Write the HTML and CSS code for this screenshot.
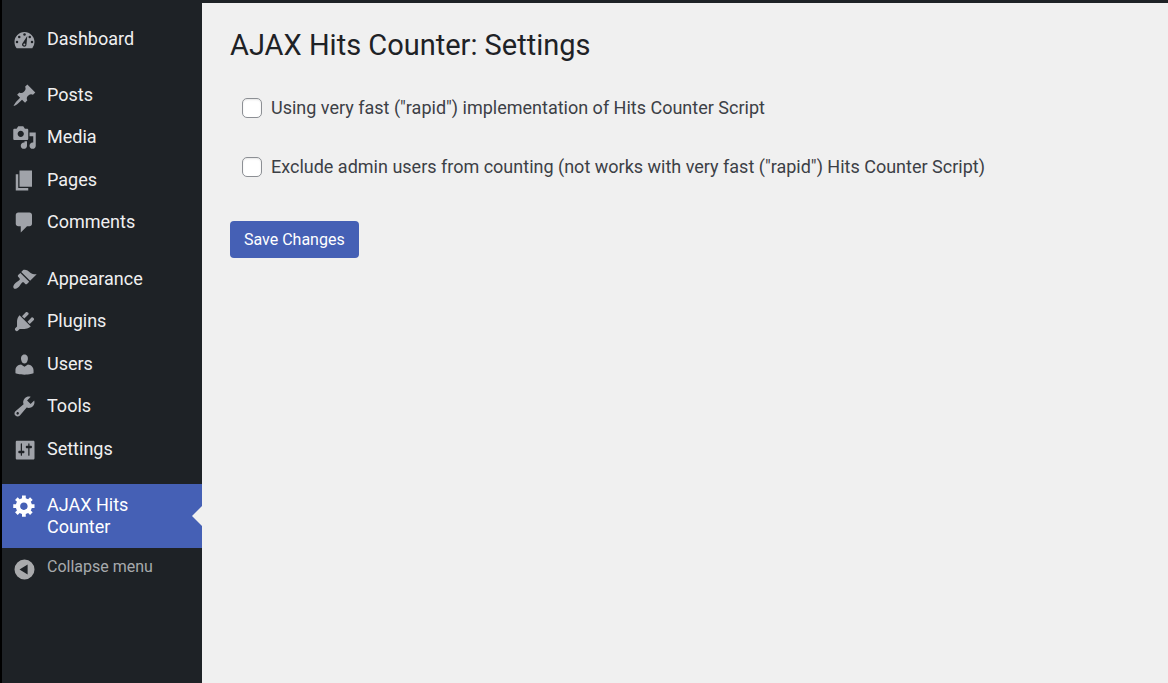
FILE: index.html
```html
<!DOCTYPE html>
<html lang="en">
<head>
<meta charset="utf-8">
<title>AJAX Hits Counter: Settings</title>
<link rel="stylesheet" href="styles.css">
</head>
<body>
<div class="admin">
  <nav class="sidebar" aria-label="Main menu">
    <ul class="menu">
      <li><a class="item" href="#"><svg class="icon" viewBox="0 0 20 20"><path d="M3.76 17h12.48A7.98 7.98 0 0 0 18 12c0-4.42-3.58-8-8-8s-8 3.58-8 8c0 1.9.66 3.65 1.76 5z"/><g class="cut"><circle cx="10" cy="6" r="1"/><circle cx="5.8" cy="8" r="1"/><circle cx="14.2" cy="8" r="1"/><circle cx="4" cy="12" r="1"/><circle cx="16" cy="12" r="1"/><path d="M12.2 7.2L11.6 13.8c0 1.2-.7 2-1.7 2s-1.9-.8-1.9-1.8c0-.7.4-1.2.8-1.7z"/></g><circle cx="9.9" cy="14" r=".8"/></svg><span>Dashboard</span></a></li>
    </ul>
    <ul class="menu">
      <li><a class="item" href="#"><svg class="icon" viewBox="0 0 20 20"><path d="M10.44 3.02l1.82-1.82 6.36 6.35-1.83 1.82c-1.05-.68-2.48-.57-3.41.36l-.75.75c-.92.93-1.04 2.35-.35 3.41l-1.83 1.82-2.41-2.41-2.8 2.79c-.42.42-3.38 2.71-3.8 2.29s1.86-3.39 2.28-3.81l2.79-2.79L4.1 9.36l1.83-1.82c1.05.69 2.48.57 3.4-.36l.75-.75c.93-.92 1.05-2.35.36-3.41z"/></svg><span>Posts</span></a></li>
      <li><a class="item" href="#"><svg class="icon" viewBox="0 0 20 20"><path fill-rule="evenodd" d="M13 11V4c0-.55-.45-1-1-1h-1.67L9 1H5L3.67 3H2c-.55 0-1 .45-1 1v7c0 .55.45 1 1 1h10c.55 0 1-.45 1-1zM7 4.5c1.38 0 2.5 1.12 2.5 2.5S8.38 9.5 7 9.5 4.5 8.38 4.5 7 5.62 4.5 7 4.5zM14 6h5v10.5c0 1.38-1.12 2.5-2.5 2.5S14 17.88 14 16.5s1.12-2.5 2.5-2.5c.17 0 .34.02.5.05V9h-3V6zm-4 8.05V13h2v3.5c0 1.38-1.12 2.5-2.5 2.5S7 17.88 7 16.5 8.12 14 9.5 14c.17 0 .34.02.5.05z"/></svg><span>Media</span></a></li>
      <li><a class="item" href="#"><svg class="icon" viewBox="0 0 20 20"><path d="M6 15V2h10v13H6zm-1 1h8v2H3V5h2v11z"/></svg><span>Pages</span></a></li>
      <li><a class="item" href="#"><svg class="icon" viewBox="0 0 20 20"><path d="M5 2h9c1.1 0 2 .9 2 2v7c0 1.1-.9 2-2 2h-2l-5 5v-5H5c-1.1 0-2-.9-2-2V4c0-1.1.9-2 2-2z"/></svg><span>Comments</span></a></li>
    </ul>
    <ul class="menu">
      <li><a class="item" href="#"><svg class="icon" viewBox="0 0 20 20"><path d="M14.48 11.06L7.41 3.99l1.5-1.5c.5-.56 2.3-.47 3.51.32 1.21.8 1.43 1.28 2.91 2.1 1.18.64 2.45 1.26 4.45.85zm-.71.71L6.7 4.7 4.93 6.47c-.39.39-.39 1.02 0 1.41l1.06 1.06c.39.39.39 1.03 0 1.42-.6.6-1.43 1.11-2.21 1.69-.35.26-.7.53-1.01.84C1.43 14.23.4 16.08 1.4 17.07c.99 1 2.84-.03 4.18-1.36.31-.31.58-.66.85-1.02.57-.78 1.08-1.61 1.69-2.21.39-.39 1.02-.39 1.41 0l1.06 1.06c.39.39 1.02.39 1.41 0z"/></svg><span>Appearance</span></a></li>
      <li><a class="item" href="#"><svg class="icon" viewBox="0 0 20 20"><path d="M13.11 4.36L9.87 7.6 8 5.73l3.24-3.24c.35-.34 1.05-.2 1.56.32.52.51.66 1.21.31 1.55zm-8 1.77l.91-1.12 9.01 9.01-1.19.84c-.71.71-2.63 1.16-3.82 1.16H6.14L4.9 17.26c-.59.59-1.54.59-2.12 0-.59-.58-.59-1.53 0-2.12l1.24-1.24v-3.88c0-1.13.4-3.19 1.09-3.89zm7.26 3.97l3.24-3.24c.34-.35 1.04-.21 1.55.31.52.51.66 1.21.31 1.55l-3.24 3.25z"/></svg><span>Plugins</span></a></li>
      <li><a class="item" href="#"><svg class="icon" viewBox="0 0 20 20"><path d="M10 9.25c-2.27 0-2.73-3.44-2.73-3.44C7 4.02 7.82 2 9.97 2c2.16 0 2.98 2.02 2.71 3.81 0 0-.41 3.44-2.68 3.44zm0 2.57L12.72 10c2.39 0 4.52 2.33 4.52 4.53v2.49s-3.65 1.13-7.24 1.13c-3.65 0-7.24-1.13-7.24-1.13v-2.49c0-2.25 1.94-4.48 4.47-4.48z"/></svg><span>Users</span></a></li>
      <li><a class="item" href="#"><svg class="icon" viewBox="0 0 20 20"><path fill-rule="evenodd" d="M16.68 9.77c-1.34 1.34-3.3 1.67-4.95.99l-5.41 6.52c-.99.99-2.59.99-3.58 0s-.99-2.59 0-3.57l6.52-5.42c-.68-1.65-.35-3.61.99-4.95 1.28-1.28 3.12-1.62 4.72-1.06l-2.89 2.89 2.82 2.82 2.86-2.87c.53 1.58.18 3.39-1.08 4.65zM3.81 16.21c.4.39 1.04.39 1.43 0 .4-.4.4-1.04 0-1.43-.39-.4-1.03-.4-1.43 0-.39.39-.39 1.03 0 1.43z"/></svg><span>Tools</span></a></li>
      <li><a class="item" href="#"><svg class="icon" viewBox="0 0 20 20"><path fill-rule="evenodd" d="M18 16V4c0-.55-.45-1-1-1H4c-.55 0-1 .45-1 1v13c0 .55.45 1 1 1h13c.55 0 1-.45 1-1zM8 11h1c.55 0 1 .45 1 1s-.45 1-1 1H8v1.5c0 .28-.22.5-.5.5s-.5-.22-.5-.5V13H6c-.55 0-1-.45-1-1s.45-1 1-1h1V5.5c0-.28.22-.5.5-.5s.5.22.5.5V11zm5-2h-1c-.55 0-1-.45-1-1s.45-1 1-1h1V5.5c0-.28.22-.5.5-.5s.5.22.5.5V7h1c.55 0 1 .45 1 1s-.45 1-1 1h-1v5.5c0 .28-.22.5-.5.5s-.5-.22-.5-.5V9z"/></svg><span>Settings</span></a></li>
    </ul>
    <ul class="menu">
      <li><a class="item current" href="#" aria-current="page"><svg class="icon" viewBox="0 0 20 20"><path fill-rule="evenodd" d="M18 12h-2.18c-.17.7-.44 1.35-.81 1.93l1.54 1.54-2.1 2.1-1.54-1.54c-.58.36-1.23.63-1.91.79V19H8v-2.18c-.68-.16-1.33-.43-1.91-.79l-1.54 1.54-2.12-2.12 1.54-1.54c-.36-.58-.63-1.23-.79-1.91H1V9.03h2.17c.16-.7.44-1.35.8-1.94L2.43 5.55l2.1-2.1 1.54 1.54c.58-.37 1.24-.64 1.93-.81V2h3v2.18c.68.16 1.33.43 1.91.79l1.54-1.54 2.12 2.12-1.54 1.54c.36.59.64 1.24.8 1.94H18V12zm-8.5 1.5c1.66 0 3-1.34 3-3s-1.34-3-3-3-3 1.34-3 3 1.34 3 3 3z"/></svg><span>AJAX Hits Counter</span></a></li>
    </ul>
    <button class="collapse" type="button"><svg class="icon" viewBox="0 0 20 20"><path fill-rule="evenodd" d="M10 2a8 8 0 1 1 0 16 8 8 0 0 1 0-16zM12.5 6L6 10l6.500 4z"/></svg><span>Collapse menu</span></button>
  </nav>
  <main class="content">
    <h1 class="title">AJAX Hits Counter: Settings</h1>
    <form>
      <div class="options">
        <label class="option" for="rapid"><input class="check" type="checkbox" id="rapid"><span>Using very fast ("rapid") implementation of Hits Counter Script</span></label>
        <label class="option" for="exclude"><input class="check" type="checkbox" id="exclude"><span>Exclude admin users from counting (not works with very fast ("rapid") Hits Counter Script)</span></label>
      </div>
      <button class="save" type="submit">Save Changes</button>
    </form>
  </main>
</div>
</body>
</html>
```
FILE: styles.css
```css
* {
  box-sizing: border-box;
}

body {
  margin: 0;
  background: #f0f0f0;
  color: #3c4046;
  font-family: Roboto, "Liberation Sans", sans-serif;
  font-size: 18px;
  line-height: 1.25;
}

.admin {
  display: flex;
  min-height: 100vh;
}

.sidebar {
  flex: none;
  width: 202px;
  padding-top: 18px;
  border-left: 2px solid #000;
  background: #1e2226;
}

.menu {
  margin: 0 0 14px;
  padding: 0;
  list-style: none;
}

.menu:first-of-type {
  margin-bottom: 13px;
}

.menu:last-of-type {
  margin-bottom: 0;
}

.item,
.collapse {
  display: flex;
  gap: 10px;
  width: 100%;
  padding: 10px;
  color: #f0f0f1;
  text-decoration: none;
}

.icon {
  flex: none;
  width: 25px;
  height: 25px;
  fill: #a0a3a9;
}

.item .icon {
  margin: -1px 0 -2px;
}

.cut {
  fill: #1e2226;
}

.item.current {
  position: relative;
  background: #4560b5;
  color: #fff;
  line-height: 22px;
}

.current .icon {
  fill: #fff;
}

.current::after {
  content: "";
  position: absolute;
  top: 50%;
  right: 0;
  margin-top: -10px;
  border: 10px solid transparent;
  border-left-width: 0;
  border-right-color: #f0f0f0;
}

.collapse {
  padding: 9px 10px;
  border: 0;
  background: none;
  color: #a7aaad;
  font: inherit;
  font-size: 16px;
  text-align: left;
}

.collapse .icon {
  fill: #a9aaac;
}

.content {
  flex: 1;
  padding: 24px 28px;
  border-top: 3px solid #1e2226;
}

.title {
  margin: 0;
  color: #1e2226;
  font-size: 29px;
  font-weight: 400;
  line-height: 36px;
}

.options {
  display: flex;
  flex-direction: column;
  align-items: flex-start;
  gap: 35px;
  padding: 33px 12px 42px;
}

.option {
  display: flex;
  align-items: center;
  gap: 9px;
  line-height: 24px;
}

.check {
  appearance: none;
  flex: none;
  width: 20px;
  height: 20px;
  margin: 0;
  border: 1px solid #8c8f94;
  border-radius: 5px;
  background: #fff;
  box-shadow: inset 0 1px 2px rgba(0, 0, 0, 0.1);
}

.save {
  padding: 8px 14px;
  border: 0;
  border-radius: 4px;
  background: #4560b5;
  color: #fff;
  font: inherit;
  font-size: 16px;
  line-height: 21px;
}
```
